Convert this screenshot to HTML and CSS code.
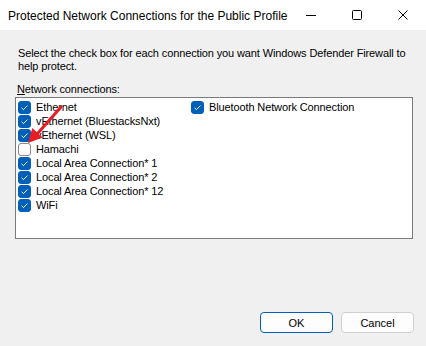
FILE: index.html
```html
<!DOCTYPE html>
<html lang="en">
<head>
  <meta charset="UTF-8" />
  <title>Protected Network Connections for the Public Profile</title>
  <link rel="stylesheet" href="styles.css">
</head>
<body>
  <div class="dialog">
    <div class="titlebar">
      <span class="title">Protected Network Connections for the Public Profile</span>
      <div class="controls">
        <span class="ctl">
          <svg width="10" height="10" viewBox="0 0 10 10"><path d="M0 5.5H10" stroke="#000" stroke-width="1"/></svg>
        </span>
        <span class="ctl">
          <svg width="10" height="10" viewBox="0 0 10 10"><rect x="0.5" y="0.5" width="9" height="9" rx="1" fill="none" stroke="#000" stroke-width="1"/></svg>
        </span>
        <span class="ctl">
          <svg width="10" height="10" viewBox="0 0 10 10"><path d="M0.5 0.5L9.5 9.5M9.5 0.5L0.5 9.5" stroke="#000" stroke-width="1"/></svg>
        </span>
      </div>
    </div>

    <div class="content">
      <p class="intro">Select the check box for each connection you want Windows Defender Firewall to help protect.</p>
      <p class="label"><u>N</u>etwork connections:</p>

      <div class="list">
        <label class="item"><span class="box on"><svg viewBox="0 0 13 13"><path d="M3.6 6.8L5.5 8.6L9.4 4.6" /></svg></span>Ethernet</label>
        <label class="item"><span class="box on"><svg viewBox="0 0 13 13"><path d="M3.6 6.8L5.5 8.6L9.4 4.6" /></svg></span>vEthernet (BluestacksNxt)</label>
        <label class="item"><span class="box on"><svg viewBox="0 0 13 13"><path d="M3.6 6.8L5.5 8.6L9.4 4.6" /></svg></span>vEthernet (WSL)</label>
        <label class="item"><span class="box"></span>Hamachi</label>
        <label class="item"><span class="box on"><svg viewBox="0 0 13 13"><path d="M3.6 6.8L5.5 8.6L9.4 4.6" /></svg></span>Local Area Connection* 1</label>
        <label class="item"><span class="box on"><svg viewBox="0 0 13 13"><path d="M3.6 6.8L5.5 8.6L9.4 4.6" /></svg></span>Local Area Connection* 2</label>
        <label class="item"><span class="box on"><svg viewBox="0 0 13 13"><path d="M3.6 6.8L5.5 8.6L9.4 4.6" /></svg></span>Local Area Connection* 12</label>
        <label class="item"><span class="box on"><svg viewBox="0 0 13 13"><path d="M3.6 6.8L5.5 8.6L9.4 4.6" /></svg></span>WiFi</label>
        <label class="item"><span class="box on"><svg viewBox="0 0 13 13"><path d="M3.6 6.8L5.5 8.6L9.4 4.6" /></svg></span>Bluetooth Network Connection</label>
      </div>

      <div class="buttons">
        <button class="btn default">OK</button>
        <button class="btn">Cancel</button>
      </div>
    </div>

    <!-- annotation arrow drawn over the list -->
    <svg class="arrow" width="426" height="346" viewBox="0 0 426 346">
      <path d="M61 107L38 133" stroke="#e81d25" stroke-width="3" stroke-linecap="round"/>
      <polygon points="28,143 32.3,128 42.7,137.4" fill="#e81d25"/>
    </svg>
  </div>
</body>
</html>
```

FILE: styles.css
```css
* {
  box-sizing: border-box;
  margin: 0;
  padding: 0;
}

html, body {
  width: 426px;
  height: 346px;
  overflow: hidden;
  background: #f0f0f0;
}

.dialog {
  position: relative;
  width: 426px;
  height: 346px;
  background: #f0f0f0;
  font-family: "Liberation Sans", Arial, sans-serif;
  font-size: 11px;
  letter-spacing: -0.12px;
  color: #000;
}

.titlebar {
  height: 30px;
  background: #fff;
  display: flex;
  align-items: center;
  justify-content: space-between;
  letter-spacing: 0;
}

.title {
  padding-left: 8px;
  font-size: 12px;
  padding-top: 1px;
}

.controls {
  display: flex;
  height: 30px;
}

.ctl {
  width: 46px;
  height: 30px;
  display: flex;
  align-items: center;
  justify-content: center;
}

.content {
  padding: 17px 12px 0 15px;
}

.intro {
  line-height: 13px;
  padding-left: 3px;
}

.label {
  line-height: 13px;
  margin-top: 10px;
  padding-left: 2px;
}

.list {
  margin-top: 1px;
  width: 398px;
  height: 142px;
  background: #fff;
  border: 1px solid #7a7a7a;
  padding: 2px 0 0 1px;
  display: grid;
  grid-auto-flow: column;
  grid-template-rows: repeat(8, 14px);
  grid-template-columns: 173px 173px;
  align-content: start;
}

.item {
  display: flex;
  align-items: center;
  gap: 5px;
  white-space: nowrap;
  line-height: 14px;
}

.box {
  width: 13px;
  height: 13px;
  border-radius: 3px;
  border: 1px solid #8a8a8a;
  background: #fff;
  flex: none;
  margin-left: 1px;
}

.box.on {
  background: #005fb8;
  border-color: #005fb8;
}

.box svg {
  display: block;
  width: 13px;
  height: 13px;
  margin: -1px;
  fill: none;
  stroke: #fff;
  stroke-width: 1;
}

.buttons {
  display: flex;
  justify-content: flex-end;
  gap: 8px;
  margin-top: 73px;
}

.btn {
  width: 73px;
  height: 21px;
  background: #fdfdfd;
  border: 1px solid #d0d0d0;
  border-radius: 4px;
  font-family: "Liberation Sans", Arial, sans-serif;
  font-size: 11px;
  color: #000;
}

.btn.default {
  border: 1px solid #005fb8;
}

.arrow {
  position: absolute;
  left: 0;
  top: 0;
  pointer-events: none;
}
```
